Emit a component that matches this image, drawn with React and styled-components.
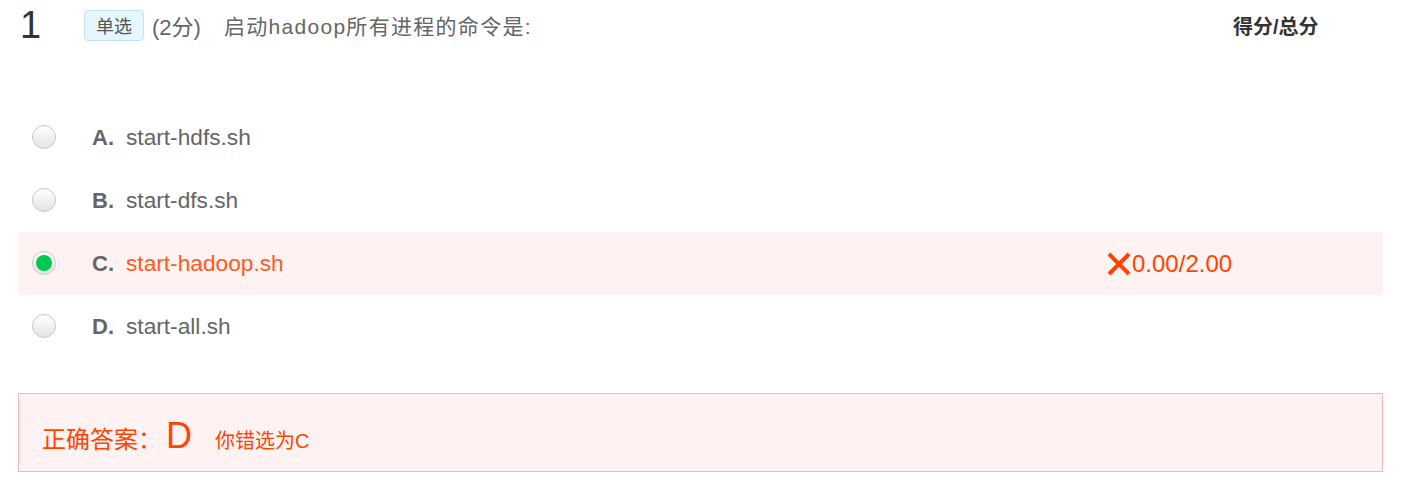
import React from "react";
import styled, { createGlobalStyle } from "styled-components";

const GlobalStyle = createGlobalStyle`
  body {
    margin: 0;
    background: #ffffff;
    font-family: "Liberation Sans", Arial, "Noto Sans CJK SC", sans-serif;
  }
`

const Pagina = styled.div`
  width: 1406px;
  padding: 0 23px 0 18px;
  box-sizing: border-box;
`
const Cabecalho = styled.div`
  display: flex;
  align-items: center;
  height: 50px;
`
const Numero = styled.div`
  width: 64px;
  padding-left: 2px;
  font-size: 38px;
  font-weight: 300;
  color: #333;
  line-height: 1;
`
const Tag = styled.span`
  display: inline-flex;
  align-items: center;
  justify-content: center;
  width: 60px;
  height: 31px;
  box-sizing: border-box;
  background: #e6f6fe;
  border: 1px solid #bfe4f5;
  border-radius: 4px;
  color: #555;
  font-size: 18px;
  font-family: "Noto Sans CJK SC", sans-serif;
`
const Pontos = styled.span`
  margin-left: 8px;
  font-size: 22px;
  color: #666;
`
const Enunciado = styled.span`
  margin-left: 23px;
  font-size: 21px;
  letter-spacing: 1.3px;
  color: #666;
  font-family: "Liberation Sans", "Noto Sans CJK SC", sans-serif;
`
const TituloNota = styled.div`
  margin-left: auto;
  width: 150px;
  font-size: 20px;
  font-weight: bold;
  color: #333;
  font-family: "Liberation Sans", "Noto Sans CJK SC", sans-serif;
`
const Lista = styled.div`
  margin-top: 56px;
  display: flex;
  flex-direction: column;
`
const Linha = styled.div`
  display: flex;
  align-items: center;
  height: 63px;
  padding-left: 14px;
  background: ${(p) => (p.marcada ? "#fff2f2" : "transparent")};
`
const Radio = styled.span`
  width: 24px;
  height: 24px;
  margin-top: -2px;
  border-radius: 50%;
  box-sizing: border-box;
  border: 1px solid #c8c8c8;
  background: linear-gradient(#ffffff, #e4e4e4);
  display: flex;
  align-items: center;
  justify-content: center;
  &::after {
    content: "";
    width: 16px;
    height: 16px;
    border-radius: 50%;
    background: #00c853;
    display: ${(p) => (p.marcada ? "block" : "none")};
  }
`
const Letra = styled.span`
  margin-left: 36px;
  width: 34px;
  font-size: 22px;
  font-weight: bold;
  color: #666;
`
const Texto = styled.span`
  font-size: 22.7px;
  color: ${(p) => (p.marcada ? "#ff5a1f" : "#666")};
`
const Nota = styled.div`
  margin-left: auto;
  width: 277px;
  display: flex;
  align-items: center;
  font-size: 24px;
  color: #ff4400;
`
const Resposta = styled.div`
  margin-top: 35px;
  height: 79px;
  box-sizing: border-box;
  border: 1px solid #f7b6b6;
  background: #fff2f2;
  display: flex;
  align-items: baseline;
  padding: 21px 0 0 23px;
  color: #ff4400;
  font-family: "Liberation Sans", "Noto Sans CJK SC", sans-serif;
`
const RotuloResposta = styled.span`
  font-size: 24px;
`
const LetraCerta = styled.span`
  font-size: 36px;
  margin-left: 4px;
`
const Errou = styled.span`
  margin-left: 23px;
  font-size: 20px;
`

const opcoes = [
  { letra: "A.", texto: "start-hdfs.sh" },
  { letra: "B.", texto: "start-dfs.sh" },
  { letra: "C.", texto: "start-hadoop.sh", marcada: true },
  { letra: "D.", texto: "start-all.sh" }
];

const IconeErro = () => (
  <svg width="26" height="26" viewBox="0 0 26 26">
    <path d="M3 3 L23 23 M23 3 L3 23" stroke="#ff4400" strokeWidth="4" />
  </svg>
);

export default function App() {
  return (
    <Pagina>
      <GlobalStyle />
      <Cabecalho>
        <Numero>1</Numero>
        <Tag>单选</Tag>
        <Pontos>(2分)</Pontos>
        <Enunciado>启动hadoop所有进程的命令是:</Enunciado>
        <TituloNota>得分/总分</TituloNota>
      </Cabecalho>
      <Lista>
        {opcoes.map((op) => (
          <Linha key={op.letra} marcada={op.marcada}>
            <Radio marcada={op.marcada} />
            <Letra>{op.letra}</Letra>
            <Texto marcada={op.marcada}>{op.texto}</Texto>
            {op.marcada ? (
              <Nota>
                <IconeErro />
                0.00/2.00
              </Nota>
            ) : (
              ""
            )}
          </Linha>
        ))}
      </Lista>
      <Resposta>
        <RotuloResposta>正确答案：</RotuloResposta>
        <LetraCerta>D</LetraCerta>
        <Errou>你错选为C</Errou>
      </Resposta>
    </Pagina>
  );
}
